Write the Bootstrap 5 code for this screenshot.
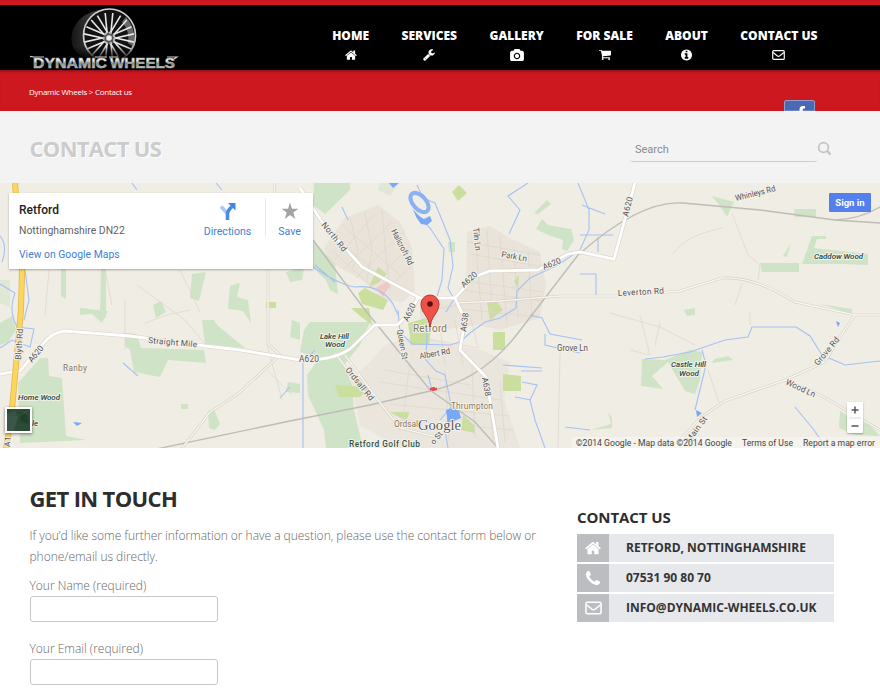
<!DOCTYPE html>
<html lang="en">
<head>
<meta charset="utf-8">
<meta name="viewport" content="width=device-width, initial-scale=1">
<title>Contact us - Dynamic Wheels</title>
<link href="https://cdn.jsdelivr.net/npm/bootstrap@5.3.0/dist/css/bootstrap.min.css" rel="stylesheet">
<style>
body{font-family:"Open Sans",sans-serif;color:#777;background:#fff;height:694px;overflow:hidden}
.site-head{height:70px;background:#000;border-top:5px solid #cd181f}
.logo-link{margin-left:28px;height:65px}
.main-menu{gap:32.5px;margin-right:62.5px;padding-top:22px}
.main-menu .nav-link{font-size:12px;font-weight:800;line-height:18px;color:#fff}
.main-menu svg{height:12px;display:block;margin:4px auto 0}
.crumb-bar{height:41px;background:#cd181f;box-shadow:inset 0 3px 3px -2px #7d0c10;padding:0 65px 0 29px}
.crumb-bar .crumbs{font-size:8px;line-height:12px;margin-top:16px;letter-spacing:-.26px;color:#fff}
.fb-tab{width:31px;height:11px}
.title-bar{height:72px;background:#f3f3f3;padding:0 48px 0 29.5px}
.title-bar h1{font-size:22px;font-weight:700;letter-spacing:-.7px;color:#ccc;text-shadow:1px 1px 0 #fff;margin:2px 0 0;line-height:30px}
.title-bar form{padding-top:2px}
.search-box{width:187px;height:27px;border:0;border-bottom:1px solid #ccc;border-radius:3px;background:transparent;font:11px Roboto,sans-serif;color:#888;padding:4px 5px 0}
.search-box::placeholder{color:#8c8c8c;opacity:1}
.map-area{height:265px;background:#f0ede5;overflow:hidden}
.map-area>svg{display:block}
.map-card{left:9px;top:10px;width:304px;height:76px;background:#fff;box-shadow:0 1px 2px rgba(0,0,0,.3);font-family:Roboto,sans-serif;font-size:10.4px;color:#5f5f5f}
.map-card a,.map-card .act{color:#427fd3;text-decoration:none}
.map-card .place{font-size:12px;font-weight:500;color:#222;line-height:16px}
.card-main{padding:9px 0 0 10px}
.card-main div,.card-main a{display:block;line-height:14px}
.card-main .county{margin-top:6px}
.card-main a{margin-top:10px;font-size:10.4px}
.act{font-size:10.6px;line-height:13px}
.act svg{display:block;margin:0 auto 5px}
.act-dir{width:75px;padding-top:9px}
.act-save{width:48px;height:39px;margin-top:5px;padding-top:4px;border-left:1px solid #eaeaea}
.sign-in{left:829px;top:10px;width:42px;height:19px;background:#5480ee;color:#fff;font:700 9.5px/20px Roboto,sans-serif;border-radius:1px}
.sat-tile{left:5px;top:224px;width:27px;height:26px;border:2px solid #fff;box-shadow:0 1px 3px rgba(0,0,0,.5)}
.zoomer{left:847px;top:219px;width:16px;height:31px;background:#fff;box-shadow:0 1px 2px rgba(0,0,0,.3);border-radius:1px}
.legal{right:0;bottom:0;height:11px;background:rgba(245,244,239,.75);font:8.65px/12px Roboto,sans-serif;color:#444;padding:0 5px 0 4px;gap:10px;white-space:nowrap}
.content-area{padding:35px 0 0 29.5px}
.form-col{width:547.5px}
.form-col h2{font-size:22px;font-weight:700;letter-spacing:-.64px;color:#2d2d2d;line-height:30px;margin:0}
.form-col p{font-size:12px;font-weight:300;line-height:21px;letter-spacing:-.02px;margin:12px 0 0;color:#666}
.form-col label{display:block;font-size:12px;font-weight:300;line-height:18px;margin-top:10px;color:#666}
.form-col .form-control{width:188px;height:26px;border:1px solid #c8c8c8;border-radius:3px;padding:2px 6px;margin-top:1px;margin-bottom:18px}
.form-col .form-control{box-shadow:none}
.side-col{width:257px;padding-top:23px}
.side-col h3{font-size:15px;font-weight:700;letter-spacing:-.08px;color:#2d2d2d;line-height:22px;margin:0 0 6px}
.info-row{height:28px;background:#e7e8ec;margin-bottom:2px;font-size:12px;font-weight:700;color:#333;padding-top:0}
.info-icon{width:32px;height:28px;background:#bcbdc1;margin-right:17px}
.woods{fill:#cfe3c6}.parks{fill:#cade9e}.urban{fill:#e8e2d9;opacity:.85}
.water{fill:none;stroke:#a6c1f3;stroke-width:1.1}
.casing{fill:none;stroke:#d4cfc4;stroke-width:2.6}.lane{fill:none;stroke:#f8f6ef;stroke-width:1.4}
.aroad{fill:none;stroke:#d8d3c9;stroke-width:4}
.rail{fill:none;stroke:#bebcb9;stroke-width:1.4}
.street{fill:none;stroke:#dcd6ca;stroke-width:.7}
.lbl text{font-family:Roboto,sans-serif;font-size:8.4px;fill:#555;stroke:#f4f1ea;stroke-width:2px;paint-order:stroke;stroke-linejoin:round}
.lbl .wood{font-style:italic;font-weight:500;fill:#24463a;font-size:8px}
.lbl .town{fill:#847961}
</style>
<script src="https://cdn.jsdelivr.net/npm/bootstrap@5.3.0/dist/js/bootstrap.bundle.min.js"></script>
</head>
<body>
<svg width="0" height="0" class="position-absolute" aria-hidden="true"><defs>
<symbol id="i-home" viewBox="0 150 1664 1450"><path d="M1408 992v480q0 26-19 45t-45 19H960v-384H704v384H320q-26 0-45-19t-19-45V992q0-1 .5-3t.5-3l575-474 575 474q1 2 1 6zm223-69l-62 74q-8 9-21 11h-3q-13 0-21-7L832 424l-692 577q-12 8-24 7-13-2-21-11l-62-74q-8-10-7-23.500t11-21.500l719-599q32-26 76-26t76 26l244 204V288q0-14 9-23t23-9h192q14 0 23 9t9 23v408l219 182q10 8 11 21.500t-7 23.500z"/></symbol>
<symbol id="i-mail" viewBox="0 0 18 14"><rect x="1" y="1" width="16" height="12" rx="1.3" fill="none" stroke="currentColor" stroke-width="1.6"/><path d="M1.500 3.500L7.600 8.400Q9 9.400 10.400 8.400L16.500 3.500" fill="none" stroke="currentColor" stroke-width="1.5"/></symbol>
</defs></svg>

<header class="site-head d-flex justify-content-between">
<a class="logo-link" href="#" aria-label="Dynamic Wheels">
<svg width="152" height="65" viewBox="28 5 152 65">
<defs><linearGradient id="chrome" x1="0" y1="0" x2="0" y2="1"><stop offset="0" stop-color="#999"/><stop offset=".4" stop-color="#fff"/><stop offset=".58" stop-color="#7d8587"/><stop offset="1" stop-color="#d8dedf"/></linearGradient>
<linearGradient id="tyre"><stop offset="0" stop-color="#161616"/><stop offset="1" stop-color="#555"/></linearGradient>
<linearGradient id="fade" x1="0" y1="0" x2="0" y2="1"><stop offset="0" stop-color="#000" stop-opacity="0"/><stop offset=".7" stop-color="#000"/></linearGradient>
<g id="spoke"><path d="M-1.800-4L-3.800-25M1.800-4L3.800-25"/></g></defs>
<path d="M108 9Q88 10 79 20Q68 33 73 47Q76 54 84 57L108 58Z" fill="url(#tyre)"/>
<ellipse cx="109.500" cy="35.500" rx="26" ry="26.500" fill="#121212" stroke="#d0d0d0" stroke-width="1.700"/>
<path d="M126 17Q137 30 134 47L128 43Q130 31 122 22Z" fill="#999" opacity=".65"/>
<g transform="translate(109 38)" stroke="#e8e8e8" stroke-width="1.600" fill="none">
<use href="#spoke"/><use href="#spoke" transform="rotate(36)"/><use href="#spoke" transform="rotate(72)"/><use href="#spoke" transform="rotate(108)"/><use href="#spoke" transform="rotate(144)"/><use href="#spoke" transform="rotate(180)"/><use href="#spoke" transform="rotate(216)"/><use href="#spoke" transform="rotate(252)"/><use href="#spoke" transform="rotate(288)"/><use href="#spoke" transform="rotate(324)"/>
<circle r="5.500" stroke="#bbb" stroke-width="2" stroke-dasharray="3 2" fill="#555"/><circle r="2.800" fill="#eee" stroke="none"/></g>
<rect x="70" y="46" width="70" height="19" fill="url(#fade)"/>
<g font-family="Liberation Sans,sans-serif" font-weight="700" font-size="15.500" fill="url(#chrome)" stroke="#a9afb0" stroke-width=".6"><text x="33" y="67.500" textLength="74" lengthAdjust="spacingAndGlyphs">DYNAMIC</text><text x="110" y="67.500" textLength="65" lengthAdjust="spacingAndGlyphs">WHEELS</text></g>
<path d="M30 56.300L34 57H44M95 57H107M109 57H118M167 57H177L174 59" fill="none" stroke="#c9cdce" stroke-width="1.200"/>
</svg></a>
<nav class="nav main-menu flex-nowrap align-items-start">
<a class="nav-link p-0" href="#">HOME<svg width="12" fill="#fff"><use href="#i-home"/></svg></a>
<a class="nav-link p-0" href="#">SERVICES<svg width="12" viewBox="60 100 1690 1690" fill="#fff"><path d="M448 1472q0-26-19-45t-45-19-45 19-19 45 19 45 45 19 45-19 19-45zm644-420l-682 682q-37 37-90 37-52 0-91-37L123 1626q-38-36-38-90 0-53 38-91l681-681q39 98 114.500 173.500T1092 1052zm634-435q0 39-23 106-47 134-164.500 217.500T1280 1024q-185 0-316.500-131.500T832 576t131.500-316.500T1280 128q58 0 121.500 16.500T1509 191q16 11 16 28t-16 28l-293 169v224l193 107q5-3 79-48.500t135.500-81T1694 582q15 0 23.500 10t8.500 25z"/></svg></a>
<a class="nav-link p-0" href="#">GALLERY<svg width="14" viewBox="0 0 1920 1664" fill="#fff"><path d="M960 672q119 0 203.500 84.500T1248 960t-84.500 203.500T960 1248t-203.500-84.500T672 960t84.500-203.500T960 672zm704-416q106 0 181 75t75 181v896q0 106-75 181t-181 75H256q-106 0-181-75T0 1408V512q0-106 75-181t181-75h224l51-136q19-49 69.500-84.500T704 0h512q53 0 103.500 35.500T1389 120l51 136h224zM960 1408q185 0 316.500-131.500T1408 960t-131.500-316.500T960 512 643.500 643.500 512 960t131.500 316.500T960 1408z"/></svg></a>
<a class="nav-link p-0" href="#">FOR SALE<svg width="12" viewBox="0 160 1664 1600" fill="#fff"><path d="M640 1536q0 52-38 90t-90 38-90-38-38-90 38-90 90-38 90 38 38 90zm896 0q0 52-38 90t-90 38-90-38-38-90 38-90 90-38 90 38 38 90zm128-1088v512q0 24-16.500 42.500T1607 1024L563 1146q13 60 13 70 0 16-24 64h920q26 0 45 19t19 45-19 45-45 19H448q-26 0-45-19t-19-45q0-11 8-31.500t16-36 21.500-40T445 1207L268 384H64q-26 0-45-19T0 320t19-45 45-19h256q16 0 28.500 6.500T368 278t13 24.500 8 26 5.500 29.500 4.500 26h1201q26 0 45 19t19 45z"/></svg></a>
<a class="nav-link p-0" href="#">ABOUT<svg width="11" viewBox="0 128 1536 1536" fill="#fff"><path d="M1024 1376v-160q0-14-9-23t-23-9h-96V672q0-14-9-23t-23-9H544q-14 0-23 9t-9 23v160q0 14 9 23t23 9h96v320h-96q-14 0-23 9t-9 23v160q0 14 9 23t23 9h448q14 0 23-9t9-23zM896 480V320q0-14-9-23t-23-9H672q-14 0-23 9t-9 23v160q0 14 9 23t23 9h192q14 0 23-9t9-23zm640 416q0 209-103 385.500T1153.500 1561 768 1664t-385.500-103T103 1281.500 0 896t103-385.500T382.500 231 768 128t385.500 103T1433 510.500 1536 896z"/></svg></a>
<a class="nav-link p-0" href="#">CONTACT US<svg width="13"><use href="#i-mail"/></svg></a>
</nav>
</header>

<div class="crumb-bar d-flex justify-content-between">
<div class="crumbs">Dynamic Wheels &gt; Contact us</div>
<svg class="fb-tab align-self-end" viewBox="0 0 31 11"><path d="M.5 11V2Q.5.500 2 .500H29Q30.500.500 30.500 2V11Z" fill="#4a69b2" stroke="#8c9fd0"/><path d="M15.500 11V9.500Q15.500 6 19 6H21V8.500H19.700Q18.700 8.500 18.700 9.600V11Z" fill="#fff"/></svg>
</div>

<section class="title-bar d-flex justify-content-between align-items-center">
<h1>CONTACT US</h1>
<form class="d-flex align-items-center"><input class="search-box" type="text" placeholder="Search" aria-label="Search">
<svg class="ms-0" width="15" height="15" viewBox="0 0 15 15" fill="none" stroke="#c4c4c4"><circle cx="6.500" cy="6.500" r="4.900" stroke-width="1.800"/><path d="M10 10L13.600 13.500" stroke-width="2.400"/></svg></form>
</section>

<section class="map-area position-relative">
<svg width="880" height="265" viewBox="0 183 880 265">
<g class="urban">
<path d="M345 218L378 205L400 222L412 248L415 290L402 303L380 296L362 280L330 262L324 248Z"/>
<path d="M467 232L490 226L510 238L540 252L546 285L540 318L500 330L478 325L440 330L420 318L420 300L455 298L466 285Z"/>
<path d="M385 345L420 335L450 345L480 350L510 362L504 400L520 448H400L360 425L350 380L370 362Z" opacity=".8"/>
</g>
<g class="woods">
<path d="M314 183H350V190L325 214L313 205ZM313 240L335 264L338 294L330 290L326 280L313 268ZM310 322H370L360 345L340 370L318 358L300 352L304 330ZM307 375L318 360L342 360L352 385L354 410L363 448H326L324 430L308 395Z"/>
<path d="M18 383L40 358H48L49 376L62 378L66 436L86 440L20 443ZM0 323L12 316L16 330L8 342L0 345ZM153 305L161 301L166 312L156 318ZM192 274L206 272L199 301L190 298ZM230 286L240 283L237 297L248 300L251 323L243 311L228 309ZM101 268H106V318L100 316ZM61 268L66 270V299L61 296ZM80 308L108 311L102 323L92 314L80 315ZM125 333L137 334L141 348L204 350L206 363L168 360L160 377L134 372L130 350L125 346ZM202 320H214L217 325L245 348L205 344ZM286 272L304 268L302 280L290 282ZM292 320L300 323V340L290 337ZM208 411L214 409L220 424L215 430L209 428ZM181 404h7v5h-7zM288 382L300 384V393L286 392Z"/>
<path d="M642 359L665 360L690 350L702 352L700 380L695 394L685 391L668 362L652 376L663 389L641 386ZM714 359L728 356L733 360L712 363ZM840 411L850 417L870 425L880 436L855 435L839 428ZM760 263H799V272H762ZM802 264L812 236L826 236V239L817 239L814 248L868 254V265L840 264ZM794 209H816V217H795ZM712 196L734 202L727 217L720 206ZM783 256L791 243L787 257ZM534 213L547 200L551 204L538 214ZM536 229L542 219L548 225L571 229L574 240L567 251L562 249L563 240L548 235ZM448 242H455V252H449ZM590 430L611 424L608 412L612 418L612 428ZM684 310L695 308V315L687 316ZM820 304L852 309L852 315L840 310Z"/>
<path d="M0 280H10V307L0 303ZM380 183H398L390 196L378 190Z" opacity=".5"/>
</g>
<g class="parks">
<path d="M452 192L459 185L467 193L458 201ZM369 287L378 267L387 274L378 283ZM358 293L365 288L388 300L383 310L362 304ZM408 323L426 318L431 330L429 345H411ZM487 302H497L503 310L490 320ZM493 332H505V350L493 350ZM503 374L521 376V391H503ZM335 385L371 387L360 397H339ZM390 412H409L407 421L397 416ZM351 308L369 308L372 325L360 316ZM463 415L475 426V433L461 430ZM266 302h10v6h-10zM514 281l5-6-1 13z"/>
<path d="M376 288L387 281L390 285L383 297Z" fill="#efc9c5"/>
</g>
<g class="street">
<path d="M342 225L400 275M335 238L392 285M332 251L376 290M350 218L358 250L352 270M365 212L372 250L367 280M382 209L385 247L390 290M335 260L375 214M345 268L392 222M356 278L405 230M370 287L410 246M382 294L412 265M467 242L540 255M470 254L544 267M466 281L543 292M463 290L542 301M460 309L538 317M475 232L482 320M487 230L493 323M500 237L507 325M514 245L518 318M528 250L532 318M420 312L475 302M423 338L478 348M440 326L445 365M455 320L463 365M470 315L478 348M385 370L470 385M380 382L501 400M390 404L510 416M400 420L514 430M410 362L402 425M445 370L449 440M472 365L475 438M487 375L493 440M500 382L505 442"/>
<path d="M45 315L49 270M137 285L185 320L205 344M145 323L167 315L190 310M267 345L282 400M267 370L292 395M105 270L112 305M125 300V350M180 270L200 312M640 315L650 355L630 350M610 313L660 327L695 345M750 312V325M673 254Q685 235 723 228M732 213L748 255L760 265L758 280M742 283L735 305M708 370L720 405M560 353L558 448M655 345L660 323"/>
</g>
<g class="water">
<path d="M0 236Q8 245 2 262M0 284L15 293Q8 310 17 327L34 329L30 347L12 340L0 348M25 270L29 300L24 320M293 269L313 267Q340 285 355 287Q380 284 393 304L398 315M398 310L400 332L412 344L450 345L460 342L470 333L485 322L500 318L516 308L517 291L530 278L558 265L580 250L589 230V210L578 183M417 185L423 198L435 203L442 220L450 240L453 266L448 288L454 299L446 312M413 210L430 228L444 249L442 280L427 330L426 360L436 371L445 375L450 400L451 407L440 420M428 375L432 390M451 407L445 430L448 448M303 448L303 363L315 350M315 265L335 282M342 207L348 220M528 183L508 196L520 210L509 234M582 205L605 214M580 235H613M598 237V252M580 274H596V295M530 315L542 318L550 334L582 340M503 365L542 368M521 371H542M522 382L537 385L530 400L535 420L545 448M515 397L531 400M565 427L590 430M645 359L663 357L690 352L725 340L748 337L752 327H796L810 336L822 355L845 365L880 361M702 350L706 365L695 410M795 407L814 430L826 448M280 398L290 387M123 363L138 376M132 183L137 190M216 183L222 190"/>
<path d="M545 334V345L580 353" />
</g>
<g fill="#78a8f6"><ellipse cx="419.500" cy="202.500" rx="6.500" ry="11.500" transform="rotate(-42 419.500 202.500)" fill="#f0ede5" stroke="#8ab1f3" stroke-width="4"/><path d="M389 183H399L393 188ZM414 211L419 216L424 219L430 216L432 221L427 225L421 224L416 217ZM696 410l6 3-5 4zM836 321l4 2-2 4zM73 422l9 1-5 3zM446 410L458 407L461 418L454 421L448 424Z"/></g>
<g class="rail"><path d="M147 451L290 421L370 405L430 391Q482 380 518 333L578 255Q640 200 683 203L760 210L835 220L880 223M313 240L365 310L430 390L475 422L498 448M835 220Q860 219 880 207"/></g>
<g class="casing"><path d="M180 451L210 412L238 394L280 355L268 344L268 265L275 183M345 355L378 400L400 428L440 438M335 353L365 393M455 303L500 301L560 296L615 296L680 291L722 278Q754 276 795 302L855 315H880M855 315L838 340L825 362L785 380L725 401L700 418L680 440M785 380L820 395L880 430M500 183"/></g>
<g class="lane"><path d="M180 451L210 412L238 394L280 355L268 344L268 265L275 183M345 355L378 400L400 428L440 438M335 353L365 393M455 303L500 301L560 296L615 296L680 291L722 278Q754 276 795 302L855 315H880M855 315L838 340L825 362L785 380L725 401L700 418L680 440M785 380L820 395L880 430"/></g>
<path class="aroad" d="M0 374L20 371L42 345Q52 332 65 331L130 336L205 346L240 350L300 360Q332 361 350 349L375 325L397 325L408 315L418 298M300 188L322 222L362 267L420 298L455 298L474 277L490 271L538 270L568 254L580 252L614 259L635 183M455 298L465 320L460 350L486 377L498 448"/>
<path d="M0 374L20 371L42 345Q52 332 65 331L130 336L205 346L240 350L300 360Q332 361 350 349L375 325L397 325L408 315L418 298M300 188L322 222L362 267L420 298L455 298L474 277L490 271L538 270L568 254L580 252L614 259L635 183M455 298L465 320L460 350L486 377L498 448" fill="none" stroke="#fff" stroke-width="2.800"/>
<path d="M15 183L22 270L21 310L11 420L6 448" fill="none" stroke="#e5b74a" stroke-width="6"/><path d="M15 183L22 270L21 310L11 420L6 448" fill="none" stroke="#fbd65e" stroke-width="4.400"/>
<path d="M430 389h7M433.500 387v4" stroke="#e24b4b" stroke-width="2.500"/>
<g class="lbl">
<text transform="translate(321 225) rotate(51)" textLength="35">North Rd</text>
<text transform="translate(391 231) rotate(63)" textLength="39" lengthAdjust="spacingAndGlyphs">Hallcroft Rd</text>
<text transform="translate(473 228) rotate(84)" textLength="23" lengthAdjust="spacingAndGlyphs">Tiln Ln</text>
<text transform="translate(501 257) rotate(10)" textLength="26">Park Ln</text>
<text transform="translate(544 270) rotate(-23)" textLength="19">A620</text>
<text transform="translate(464 288) rotate(-43)" textLength="19">A620</text>
<text transform="translate(408 322) rotate(-65)" textLength="19">A620</text>
<text transform="translate(628 217) rotate(-76)" textLength="20">A620</text>
<text transform="translate(466 332) rotate(-82)" textLength="19">A638</text>
<text transform="translate(482 378) rotate(80)" textLength="19">A638</text>
<text x="299" y="362" textLength="20">A620</text>
<text transform="translate(32 363) rotate(-51)" textLength="19">A620</text>
<text transform="translate(21 360) rotate(-86)" textLength="31">Blyth Rd</text>
<text transform="translate(10 447) rotate(-86)">A1</text>
<text transform="translate(148 343) rotate(5)" textLength="49">Straight Mile</text>
<text transform="translate(736 201) rotate(-14)" textLength="41" lengthAdjust="spacingAndGlyphs">Whinleys Rd</text>
<text transform="translate(618 296) rotate(-3)" textLength="46">Leverton Rd</text>
<text transform="translate(397 330) rotate(80)" textLength="30" lengthAdjust="spacingAndGlyphs">Queen St</text>
<text transform="translate(420 359) rotate(-10)" textLength="31" lengthAdjust="spacingAndGlyphs">Albert Rd</text>
<text transform="translate(345 370) rotate(51)" textLength="40">Ordsall Rd</text>
<text x="557" y="351" textLength="31" lengthAdjust="spacingAndGlyphs">Grove Ln</text>
<text transform="translate(818 366) rotate(-50)" textLength="34">Grove Rd</text>
<text transform="translate(785 384) rotate(25)" textLength="32">Wood Ln</text>
<text transform="translate(690 443) rotate(-54)" textLength="30">Main St</text>
<text transform="translate(434 445) rotate(-50)" style="font-size:8px">o St</text>
<text class="town" x="413" y="332" textLength="34" style="font-size:10px">Retford</text>
<text class="town" x="451" y="409" textLength="42">Thrumpton</text>
<text class="town" x="394" y="427">Ordsal</text>
<text class="town" x="63" y="371" textLength="24">Ranby</text>
<text class="wood" x="18" y="400" textLength="42" lengthAdjust="spacingAndGlyphs">Home Wood</text><text class="wood" x="32" y="426">le</text>
<text class="wood" x="320" y="339" textLength="29" lengthAdjust="spacingAndGlyphs">Lake Hill</text><text class="wood" x="325" y="347" textLength="20" lengthAdjust="spacingAndGlyphs">Wood</text>
<text class="wood" x="671" y="367" textLength="35" lengthAdjust="spacingAndGlyphs">Castle Hill</text><text class="wood" x="679" y="376" textLength="20" lengthAdjust="spacingAndGlyphs">Wood</text>
<text class="wood" x="814" y="259" textLength="49" lengthAdjust="spacingAndGlyphs">Caddow Wood</text>
<text x="349" y="447" textLength="71" style="fill:#2f5142;font-weight:500">Retford Golf Club</text>
<text x="418" y="430" textLength="43" lengthAdjust="spacingAndGlyphs" style="font:15px 'Liberation Serif',serif;fill:#555;stroke:#fff;stroke-width:1.500px">Google</text>
</g>
<path d="M430 327C429 316 421 313 421 304A9 9 0 0 1 439 304C439 313 431 316 430 327Z" fill="#ed5147" stroke="#b7362f" stroke-width="1"/><circle cx="430" cy="304" r="2.800" fill="#54120e"/>
</svg>
<div class="map-card position-absolute d-flex">
<div class="card-main flex-grow-1"><div class="place">Retford</div><div class="county">Nottinghamshire DN22</div><a href="#">View on Google Maps</a></div>
<div class="act act-dir text-center"><svg width="17" height="18" viewBox="0 0 17 18"><path d="M7.500 10.500L2 4.500" stroke="#a9c8f2" stroke-width="3.400"/><path d="M8.500 18V11.500Q8.500 9 13 4.500" fill="none" stroke="#4a8ae2" stroke-width="3.600"/><path d="M9 1H16.500V8.500Z" fill="#4284e0"/></svg>Directions</div>
<div class="act act-save text-center"><svg width="18" height="18" viewBox="0 0 18 18"><path d="M9 .5L11 6.700H17.500L12.300 10.600L14.300 17L9 13.100L3.700 17L5.700 10.600L.5 6.700H7Z" fill="#a3a3a3"/></svg>Save</div>
</div>
<div class="sign-in position-absolute text-center">Sign in</div>
<svg class="sat-tile position-absolute" viewBox="0 0 23 22" preserveAspectRatio="none"><rect width="23" height="22" fill="#2c4b37"/><path d="M0 5L8 2L11 9L7 22H0Z" fill="#3a5546"/><path d="M12 3L20 6L22 15L14 12Z" fill="#213f2a"/><path d="M3 20L9 8L21 2" fill="none" stroke="#41604d" stroke-width=".6"/></svg>
<svg class="zoomer position-absolute" viewBox="0 0 16 31"><path d="M4.500 8H11.500M8 4.500V11.500M4.500 24H11.500" stroke="#555" stroke-width="1.500"/><path d="M2 16H14" stroke="#ddd"/></svg>
<div class="legal position-absolute d-flex"><span>©2014 Google - Map data ©2014 Google</span><span>Terms of Use</span><span>Report a map error</span></div>
</section>

<main class="content-area d-flex align-items-start">
<form class="form-col">
<h2>GET IN TOUCH</h2>
<p>If you’d like some further information or have a question, please use the contact form below or<br>phone/email us directly.</p>
<label for="name">Your Name (required)</label><input id="name" class="form-control" type="text">
<label for="email" class="mt-0">Your Email (required)</label><input id="email" class="form-control" type="email">
</form>
<aside class="side-col">
<h3>CONTACT US</h3>
<div class="info-row d-flex align-items-center"><span class="info-icon d-flex align-items-center justify-content-center text-white"><svg width="16" height="14" fill="#fff"><use href="#i-home"/></svg></span>RETFORD, NOTTINGHAMSHIRE</div>
<div class="info-row d-flex align-items-center"><span class="info-icon d-flex align-items-center justify-content-center"><svg width="14" height="14" viewBox="0 128 1408 1408" fill="#fff"><path d="M1408 1240q0 27-10 70.500t-21 68.500q-21 50-122 106-94 51-186 51-27 0-53-3.500t-57.500-12.500-47-14.500-55.500-20.500-49-18q-98-35-175-83-127-79-264-216T152 904q-48-77-83-175-3-9-18-49t-20.500-55.500-14.500-47-12.500-57.500T0 467q0-92 51-186Q107 180 157 159q25-11 68.500-21t70.500-10q14 0 21 3 18 6 53 76 11 19 30 54t35 63.500 31 53.500q3 4 17.500 25t21.500 35.500 7 28.500q0 20-28.500 50t-62 55-62 53-28.500 46q0 9 5 22.500t8.500 20.500 14 24 11.500 19q76 137 174 235t235 174q2 1 19 11.500t24 14 20.500 8.500 22.500 5q18 0 46-28.500t53-62 55-62 50-28.500q14 0 28.500 7t35.500 21.500 25 17.500q25 15 53.500 31t63.500 35 54 30q70 35 76 53 3 7 3 21z"/></svg></span>07531 90 80 70</div>
<div class="info-row d-flex align-items-center"><span class="info-icon d-flex align-items-center justify-content-center text-white"><svg width="17" height="14"><use href="#i-mail"/></svg></span>INFO@DYNAMIC-WHEELS.CO.UK</div>
</aside>
</main>
</body>
</html>
